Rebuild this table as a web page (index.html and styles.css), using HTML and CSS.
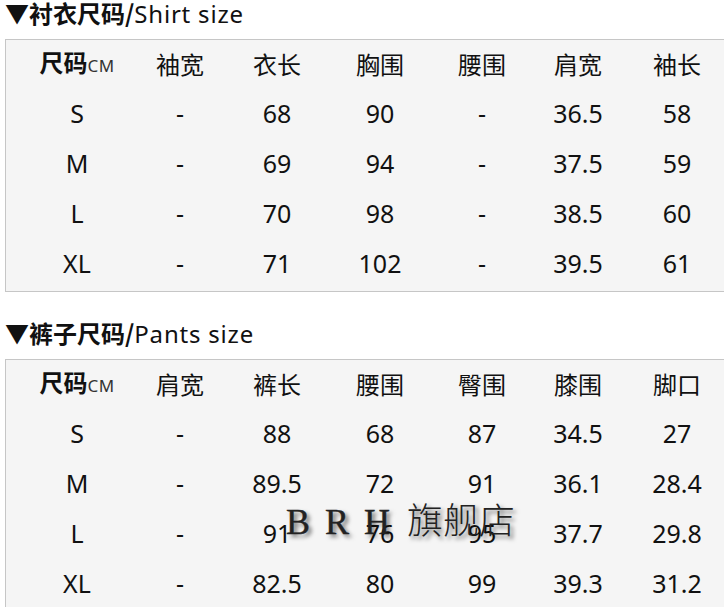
FILE: index.html
```html
<!DOCTYPE html>
<html>
<head>
<meta charset="utf-8">
<link rel="stylesheet" href="styles.css">
</head>
<body>
<div class="page">
  <h2 class="title"><b>▼衬衣尺码/</b>Shirt size</h2>
  <div class="box">
    <div class="row head"><div><b>尺码</b><small>CM</small></div><div>袖宽</div><div>衣长</div><div>胸围</div><div>腰围</div><div>肩宽</div><div>袖长</div></div>
    <div class="row"><div>S</div><div>-</div><div>68</div><div>90</div><div>-</div><div>36.5</div><div>58</div></div>
    <div class="row"><div>M</div><div>-</div><div>69</div><div>94</div><div>-</div><div>37.5</div><div>59</div></div>
    <div class="row"><div>L</div><div>-</div><div>70</div><div>98</div><div>-</div><div>38.5</div><div>60</div></div>
    <div class="row"><div>XL</div><div>-</div><div>71</div><div>102</div><div>-</div><div>39.5</div><div>61</div></div>
  </div>
  <h2 class="title second"><b>▼裤子尺码/</b>Pants size</h2>
  <div class="box">
    <div class="row head"><div><b>尺码</b><small>CM</small></div><div>肩宽</div><div>裤长</div><div>腰围</div><div>臀围</div><div>膝围</div><div>脚口</div></div>
    <div class="row"><div>S</div><div>-</div><div>88</div><div>68</div><div>87</div><div>34.5</div><div>27</div></div>
    <div class="row"><div>M</div><div>-</div><div>89.5</div><div>72</div><div>91</div><div>36.1</div><div>28.4</div></div>
    <div class="row"><div>L</div><div>-</div><div>91</div><div>76</div><div>95</div><div>37.7</div><div>29.8</div></div>
    <div class="row"><div>XL</div><div>-</div><div>82.5</div><div>80</div><div>99</div><div>39.3</div><div>31.2</div></div>
  </div>
  <div class="watermark"><span class="latin">B</span><span class="latin">R</span><span class="latin">H</span><span class="cjk">旗舰店</span></div>
</div>
</body>
</html>
```
FILE: styles.css
```css
html, body {
  margin: 0;
  padding: 0;
  background: #ffffff;
  overflow: hidden;
}
.page {
  position: relative;
  width: 724px;
  height: 607px;
  overflow: hidden;
  font-family: "Noto Sans", "Noto Sans CJK SC", sans-serif;
  color: #111;
}
.title {
  margin: 0;
  padding-left: 5px;
  height: 28px;
  line-height: 26px;
  font-size: 24px;
  font-weight: 400;
  color: #111;
  white-space: nowrap;
  letter-spacing: 0.8px;
}
.title b {
  font-weight: 700;
  letter-spacing: 0;
  font-family: "Noto Sans CJK SC", sans-serif;
}
.second {
  margin-top: 28px;
}
.box {
  margin-left: 5px;
  margin-top: 11px;
  width: 740px;
  border: 1px solid #c6c6c6;
  background: #f5f5f5;
  padding-bottom: 3px;
}
.row {
  display: grid;
  grid-template-columns: 21px 100px 106px 88px 118px 86px 106px 92px;
  height: 50px;
  line-height: 46px;
  align-items: center;
  font-size: 25px;
  color: #111;
}
.row::before {
  content: "";
}
.row > div {
  text-align: center;
  white-space: nowrap;
}
.head {
  font-family: "Noto Sans CJK SC", sans-serif;
  font-size: 24px;
  height: 48px;
  line-height: 40px;
}
.head b {
  font-weight: 700;
}
.head small {
  font-family: "Noto Sans", sans-serif;
  font-size: 17px;
  color: #333;
  letter-spacing: 0.5px;
}
.watermark {
  position: absolute;
  left: 286px;
  top: 492px;
  display: flex;
  align-items: baseline;
  color: #222;
  text-shadow: 3px 3px 4px rgba(0, 0, 0, 0.55);
}
.watermark .latin {
  font-family: "Liberation Serif", serif;
  font-size: 36px;
  margin-right: 15px;
  -webkit-text-stroke: 0.4px #222;
}
.watermark .cjk {
  font-family: "Noto Sans CJK SC", sans-serif;
  font-size: 36px;
  font-weight: 300;
  margin-left: 2px;
}
```
